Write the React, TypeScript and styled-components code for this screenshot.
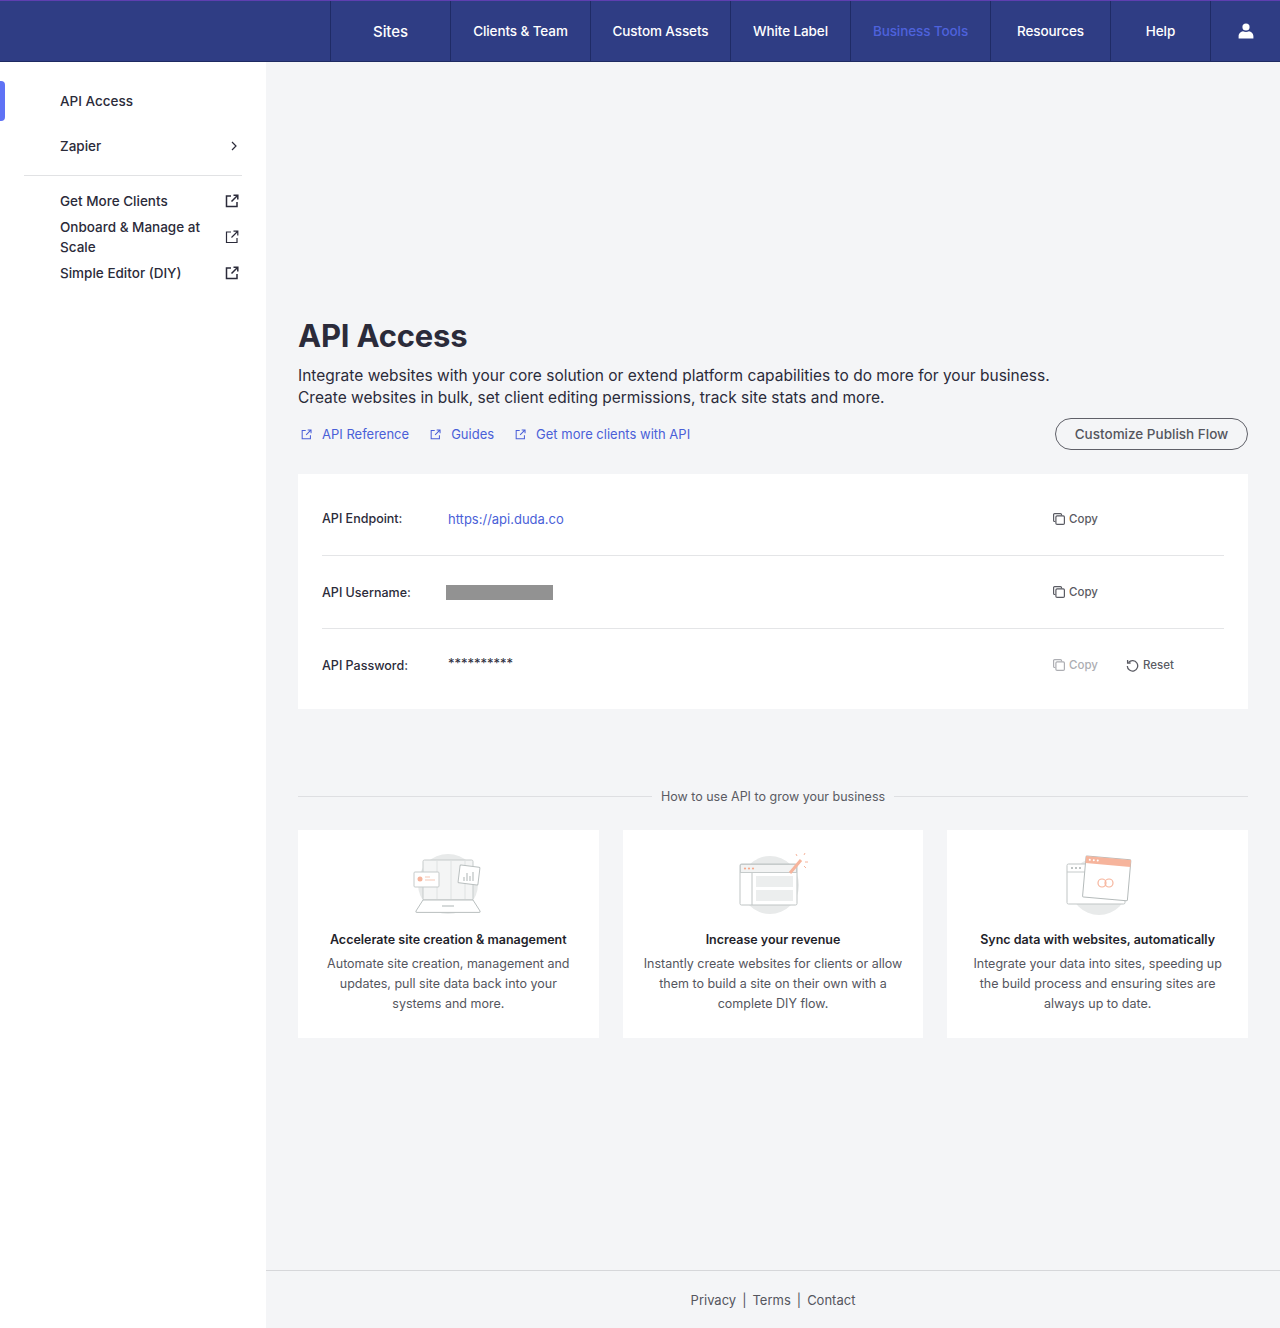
import React from "react";
import styled, { createGlobalStyle } from "styled-components";

const FONT = `Inter, "Liberation Sans", Arial, sans-serif`;

const GlobalStyle = createGlobalStyle`
  html, body {
    margin: 0;
    padding: 0;
    background: #f4f5f7;
    font-family: ${FONT};
    color: #2b2b3a;
  }
  * { box-sizing: border-box; }
`;

const navItems = [
  { label: "Sites", width: 120, size: 15 },
  { label: "Clients & Team", width: 140 },
  { label: "Custom Assets", width: 140 },
  { label: "White Label", width: 120 },
  { label: "Business Tools", width: 140, active: true },
  { label: "Resources", width: 120 },
  { label: "Help", width: 100 },
];

function ExternalIcon({ size = 14, color = "currentColor", weight = 1.5 }: { size?: number; color?: string; weight?: number }) {
  return (
    <svg width={size} height={size} viewBox="0 0 14 14" fill="none" stroke={color} strokeWidth={weight}>
      <path d="M6 2H1.5v10.5H12V8" />
      <path d="M6.5 7.5 12.5 1.5M8.5 1.2h4.3v4.3" />
    </svg>
  );
}

function CopyIcon() {
  return (
    <svg width="12" height="12" viewBox="0 0 12 12" fill="none" stroke="currentColor" strokeWidth="1.2">
      <path d="M8.5 2.4V1.6a1 1 0 0 0-1-1H1.6a1 1 0 0 0-1 1v5.9a1 1 0 0 0 1 1h.8" />
      <rect x="2.9" y="2.9" width="8.5" height="8.5" rx="1.2" />
    </svg>
  );
}

function ResetIcon() {
  return (
    <svg width="13" height="13" viewBox="0 0 13 13" fill="none" stroke="currentColor" strokeWidth="1.3">
      <path d="M2.6 3.4A5.2 5.2 0 1 1 1.3 7" />
      <path d="M1.6 1v3h3" />
    </svg>
  );
}

function UserIcon() {
  return (
    <svg width="16" height="16" viewBox="0 0 16 16" fill="#fff">
      <circle cx="8" cy="4" r="3.6" />
      <path d="M.6 15.6v-2.4C.6 10.4 3 8.4 5 8.2c1.8 1 4.2 1 6 0 2 .2 4.4 2.2 4.4 5v2.4z" />
    </svg>
  );
}

function LaptopArt() {
  return (
    <svg width="70" height="62" viewBox="0 0 70 62" fill="none">
      <circle cx="35" cy="31" r="30" fill="#e8eaea" />
      <rect x="10" y="7" width="50" height="40" rx="1.5" fill="#f4f5f5" stroke="#c6cbcb" />
      <path d="M24 8v38M38 8v38M52 8v38" stroke="#dfe2e2" />
      <path d="M10 47h50l7 11a1 1 0 0 1-1 1.4H4a1 1 0 0 1-1-1.4z" fill="#fff" stroke="#b9bfbf" />
      <path d="M29 53h12" stroke="#d6dada" strokeWidth="2" />
      <rect x="1" y="19" width="25" height="15" rx="1" fill="#fff" stroke="#c6cbcb" />
      <circle cx="7" cy="26" r="2.5" fill="#f6b49c" />
      <path d="M12 24h5M12 27h10" stroke="#f6c8b6" strokeWidth="1.2" />
      <rect x="46" y="13" width="20" height="18" rx="1" transform="rotate(7 56 22)" fill="#fff" stroke="#b9bfbf" />
      <path d="M51 28v-4M54 28v-8M57 28v-5M60 28v-9" stroke="#c6cbcb" strokeWidth="1.4" />
    </svg>
  );
}

function WandArt() {
  return (
    <svg width="70" height="62" viewBox="0 0 70 62" fill="none">
      <circle cx="32" cy="32" r="29" fill="#e8eaea" />
      <rect x="2" y="11" width="57" height="41" rx="1.5" fill="#fff" stroke="#bfc4c4" />
      <rect x="2.5" y="11.5" width="56" height="8" fill="#f2f3f3" stroke="#c6cbcb" />
      <circle cx="7" cy="15.5" r="1.1" fill="#f6a98c" />
      <circle cx="11" cy="15.5" r="1.1" fill="#f6a98c" />
      <circle cx="15" cy="15.5" r="1.1" fill="#f6a98c" />
      <path d="M14 20v32" stroke="#bfc4c4" />
      <rect x="18" y="23" width="37" height="11" fill="#eceeee" />
      <rect x="18" y="37" width="37" height="11" fill="#eceeee" />
      <path d="M52 20 63 7" stroke="#f6b49c" strokeWidth="3" />
      <path d="M66 2 67 0M70 9h-3M59 3l-1-2M66 13l2 2" stroke="#f6b49c" strokeWidth="1" />
    </svg>
  );
}

function SyncArt() {
  return (
    <svg width="70" height="62" viewBox="0 0 70 62" fill="none">
      <circle cx="36" cy="33" r="29" fill="#e8eaea" />
      <rect x="4" y="11" width="58" height="40" rx="1.5" fill="#fff" stroke="#c0c5c5" />
      <path d="M4 19h20" stroke="#c6cbcb" />
      <circle cx="9" cy="15" r="1" fill="#aab0b0" />
      <circle cx="13" cy="15" r="1" fill="#aab0b0" />
      <circle cx="17" cy="15" r="1" fill="#aab0b0" />
      <g transform="rotate(5 45 28)">
        <rect x="21" y="5" width="45" height="41" rx="1" fill="#fff" stroke="#b5bbbb" />
        <rect x="21" y="5" width="45" height="7" fill="#f6b49c" />
        <circle cx="25" cy="8.5" r="1" fill="#fff" />
        <circle cx="29" cy="8.5" r="1" fill="#fff" />
        <circle cx="33" cy="8.5" r="1" fill="#fff" />
      </g>
      <circle cx="39" cy="30" r="4" stroke="#f6b49c" strokeWidth="1.2" />
      <circle cx="46" cy="30" r="4" stroke="#f6b49c" strokeWidth="1.2" />
    </svg>
  );
}

const cards = [
  {
    art: <LaptopArt />,
    title: "Accelerate site creation & management",
    lines: "Automate site creation, management and updates, pull site data back into your systems and more.",
  },
  {
    art: <WandArt />,
    title: "Increase your revenue",
    lines: "Instantly create websites for clients or allow them to build a site on their own with a complete DIY flow.",
  },
  {
    art: <SyncArt />,
    title: "Sync data with websites, automatically",
    lines: "Integrate your data into sites, speeding up the build process and ensuring sites are always up to date.",
  },
];

export default function App() {
  return (
    <>
      <GlobalStyle />
      <Page>
        <TopNav>
          {navItems.map((item) => (
            <NavItem key={item.label} $width={item.width} $active={item.active} $size={item.size}>
              {item.label}
            </NavItem>
          ))}
          <NavUser>
            <UserIcon />
          </NavUser>
        </TopNav>
        <Body>
          <Sidebar>
            <SideItem $active>API Access</SideItem>
            <SideItem>
              Zapier
              <Chevron viewBox="0 0 8 10" fill="none" stroke="#2b2b3a" strokeWidth="1.2">
                <path d="M2 1l4 4-4 4" />
              </Chevron>
            </SideItem>
            <SideDivider />
            <SideLinks>
              <SideLink>
                Get More Clients
                <ExternalIcon />
              </SideLink>
              <SideLink>
                <SideLinkWrap>Onboard & Manage at Scale</SideLinkWrap>
                <ExternalIcon weight={1.2} />
              </SideLink>
              <SideLink>
                Simple Editor (DIY)
                <ExternalIcon />
              </SideLink>
            </SideLinks>
          </Sidebar>
          <Main>
            <Content>
              <Title>API Access</Title>
              <Intro>
                Integrate websites with your core solution or extend platform capabilities to do more for your business.
                <br />
                Create websites in bulk, set client editing permissions, track site stats and more.
              </Intro>
              <LinksRow>
                <Links>
                  <TopLink>
                    <ExternalIcon size={11} weight={1.3} />
                    API Reference
                  </TopLink>
                  <TopLink>
                    <ExternalIcon size={11} weight={1.3} />
                    Guides
                  </TopLink>
                  <TopLink>
                    <ExternalIcon size={11} weight={1.3} />
                    Get more clients with API
                  </TopLink>
                </Links>
                <OutlineButton>Customize Publish Flow</OutlineButton>
              </LinksRow>
              <CredPanel>
                <CredRow>
                  <CredLabel>API Endpoint:</CredLabel>
                  <CredLink>https://api.duda.co</CredLink>
                  <CredActions>
                    <ActionBtn>
                      <CopyIcon />
                      Copy
                    </ActionBtn>
                  </CredActions>
                </CredRow>
                <CredRow>
                  <CredLabel>API Username:</CredLabel>
                  <Redacted />
                  <CredActions>
                    <ActionBtn>
                      <CopyIcon />
                      Copy
                    </ActionBtn>
                  </CredActions>
                </CredRow>
                <CredRow>
                  <CredLabel>API Password:</CredLabel>
                  <Password>**********</Password>
                  <CredActions>
                    <ActionBtn $disabled>
                      <CopyIcon />
                      Copy
                    </ActionBtn>
                    <ActionBtn>
                      <ResetIcon />
                      Reset
                    </ActionBtn>
                  </CredActions>
                </CredRow>
              </CredPanel>
              <SectionHead>
                <span>How to use API to grow your business</span>
              </SectionHead>
              <CardGrid>
                {cards.map((card) => (
                  <Card key={card.title}>
                    <CardArt>{card.art}</CardArt>
                    <CardTitle>{card.title}</CardTitle>
                    <CardText>{card.lines}</CardText>
                  </Card>
                ))}
              </CardGrid>
            </Content>
            <Footer>
              <FooterLink>Privacy</FooterLink>|<FooterLink>Terms</FooterLink>|<FooterLink>Contact</FooterLink>
            </Footer>
          </Main>
        </Body>
      </Page>
    </>
  );
}

const Page = styled.div`
  display: flex;
  flex-direction: column;
  width: 1280px;
  height: 1328px;
  overflow: hidden;
`;

const TopNav = styled.header`
  display: flex;
  justify-content: flex-end;
  flex: none;
  height: 62px;
  background: #2f3d84;
  border-top: 1px solid #5f3fb0;
  border-bottom: 1px solid #1e2a62;
`;

const NavItem = styled.div<{ $width: number; $active?: boolean; $size?: number }>`
  display: flex;
  align-items: center;
  justify-content: center;
  width: ${(p) => p.$width}px;
  border-left: 1px solid #1f2b66;
  color: ${(p) => (p.$active ? "#4e62dc" : "#fff")};
  font-size: ${(p) => p.$size || 13.5}px;
  font-weight: 500;
  letter-spacing: -0.1px;
`;

const NavUser = styled.div`
  display: flex;
  align-items: center;
  justify-content: center;
  width: 70px;
  border-left: 1px solid #1f2b66;
`;

const Body = styled.div`
  display: flex;
  flex: 1;
  min-height: 0;
`;

const Sidebar = styled.aside`
  flex: none;
  width: 266px;
  padding-top: 16px;
  background: #fff;
`;

const SideItem = styled.div<{ $active?: boolean }>`
  position: relative;
  display: flex;
  align-items: center;
  justify-content: space-between;
  height: 45px;
  padding: 0 28px 0 60px;
  font-size: 13.5px;
  font-weight: 500;
  &::before {
    content: "";
    display: ${(p) => (p.$active ? "block" : "none")};
    position: absolute;
    left: 0;
    top: 3px;
    width: 5px;
    height: 40px;
    border-radius: 0 4px 4px 0;
    background: #5f72f5;
  }
`;

const Chevron = styled.svg`
  width: 8px;
  height: 10px;
`;

const SideDivider = styled.div`
  height: 1px;
  margin: 7px 24px 0;
  background: #e1e2e4;
`;

const SideLinks = styled.div`
  display: flex;
  flex-direction: column;
  gap: 6px;
  padding: 15px 27px 0 60px;
`;

const SideLink = styled.div`
  display: flex;
  align-items: center;
  justify-content: space-between;
  min-height: 20px;
  line-height: 20px;
  font-size: 13.5px;
  font-weight: 500;
  color: #2b2b3a;
`;

const SideLinkWrap = styled.span`
  width: 150px;
`;

const Main = styled.main`
  display: flex;
  flex: 1;
  flex-direction: column;
  min-width: 0;
`;

const Content = styled.div`
  flex: 1;
  padding: 254px 32px 0;
`;

const Title = styled.h1`
  margin: 0;
  font-size: 31px;
  line-height: 40px;
  font-weight: 700;
  letter-spacing: -0.2px;
  color: #2b2b3a;
`;

const Intro = styled.p`
  margin: 9px 0 0;
  font-size: 15.5px;
  line-height: 22px;
  color: #2b2b3a;
`;

const LinksRow = styled.div`
  display: flex;
  align-items: center;
  justify-content: space-between;
  height: 32px;
  margin-top: 9px;
`;

const Links = styled.div`
  display: flex;
  gap: 21px;
  padding-left: 3px;
`;

const TopLink = styled.a`
  display: flex;
  align-items: center;
  gap: 10px;
  font-size: 13px;
  color: #4a5fd8;
`;

const OutlineButton = styled.button`
  width: 193px;
  height: 32px;
  background: transparent;
  border: 1px solid #5f6068;
  border-radius: 16px;
  font: 500 13.5px ${FONT};
  color: #55565e;
`;

const CredPanel = styled.section`
  margin-top: 24px;
  padding: 8px 24px;
  background: #fff;
`;

const CredRow = styled.div`
  display: flex;
  align-items: center;
  height: 73px;
  & + & {
    border-top: 1px solid #e4e5e7;
  }
`;

const CredLabel = styled.div`
  width: 124px;
  font-size: 12.5px;
  font-weight: 500;
  color: #2b2b3a;
`;

const CredLink = styled.a`
  font-size: 13px;
  margin-left: 2px;
  color: #4a5fd8;
`;

const Redacted = styled.div`
  width: 107px;
  height: 15px;
  background: #929292;
`;

const Password = styled.div`
  font-size: 13px;
  margin: -4px 0 0 2px;
  color: #2b2b3a;
`;

const CredActions = styled.div`
  display: flex;
  gap: 28px;
  margin-left: auto;
  width: 171px;
`;

const ActionBtn = styled.div<{ $disabled?: boolean }>`
  display: flex;
  align-items: center;
  gap: 4px;
  font-size: 11.5px;
  font-weight: 500;
  color: ${(p) => (p.$disabled ? "#adaeb3" : "#5a5b63")};
`;

const SectionHead = styled.div`
  display: flex;
  align-items: center;
  gap: 9px;
  margin-top: 80px;
  font-size: 12.5px;
  color: #5a5b63;
  &::before,
  &::after {
    content: "";
    flex: 1;
    height: 1px;
    background: #dedfe2;
  }
`;

const CardGrid = styled.div`
  display: grid;
  grid-template-columns: repeat(3, 1fr);
  gap: 24px;
  margin-top: 26px;
`;

const Card = styled.article`
  height: 208px;
  padding: 23px 16px 0;
  background: #fff;
  text-align: center;
`;

const CardArt = styled.div`
  display: flex;
  justify-content: center;
  height: 62px;
`;

const CardTitle = styled.h3`
  margin: 15px 0 0;
  font-size: 12.5px;
  line-height: 20px;
  font-weight: 600;
  color: #1f1f2b;
`;

const CardText = styled.p`
  margin: 4px 0 0;
  font-size: 12.5px;
  line-height: 20px;
  color: #55565e;
`;

const Footer = styled.footer`
  display: flex;
  align-items: center;
  justify-content: center;
  gap: 6px;
  flex: none;
  height: 58px;
  border-top: 1px solid #d6d7da;
  font-size: 13px;
  color: #55565e;
`;

const FooterLink = styled.a`
  color: #55565e;
`;
